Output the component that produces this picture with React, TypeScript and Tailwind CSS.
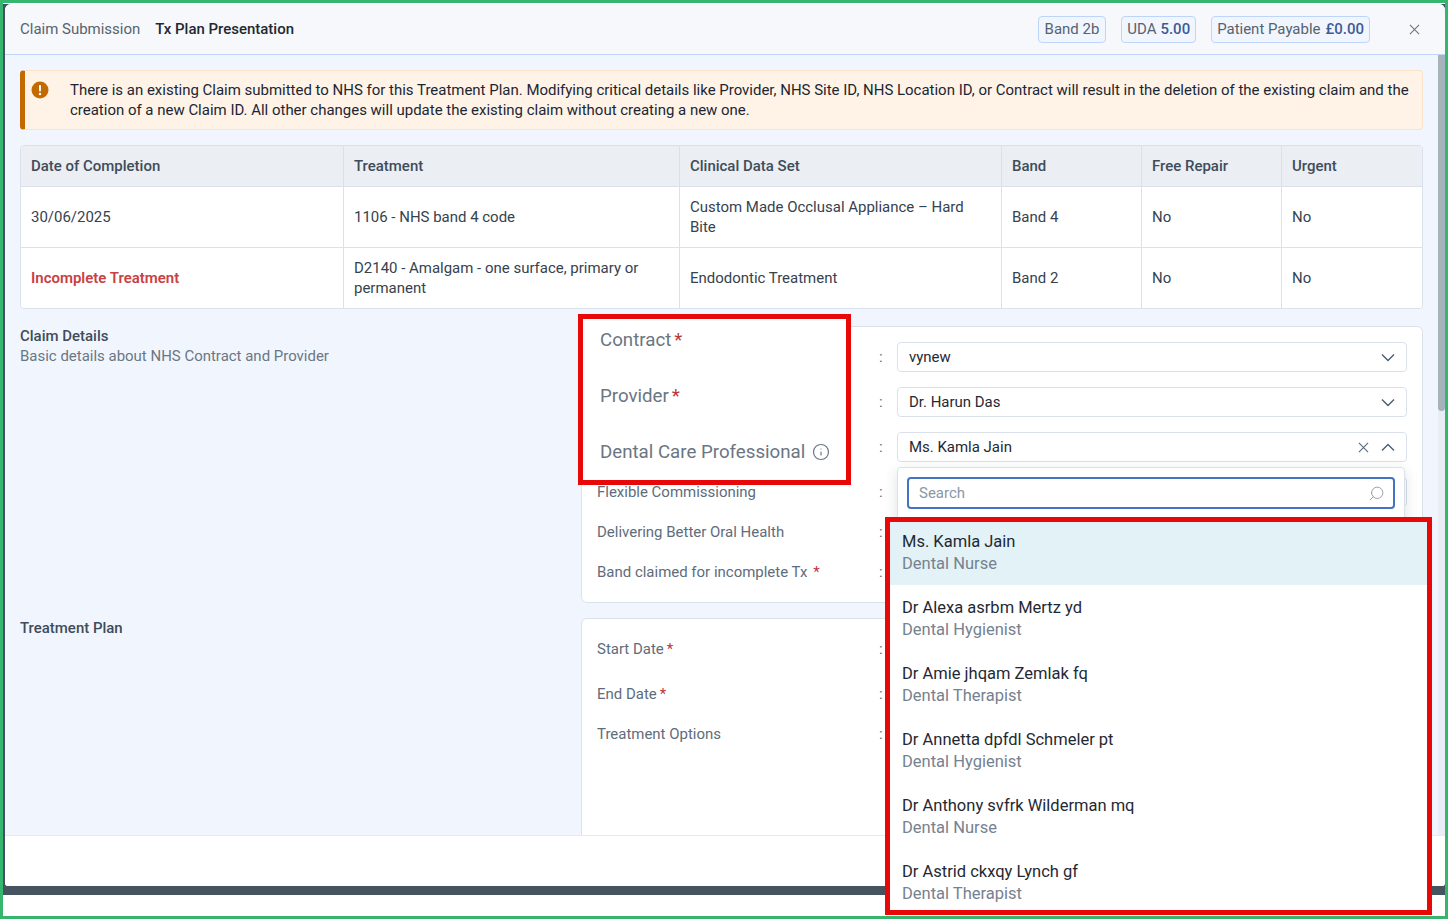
import React from "react";
import { Search, Info } from "lucide-react";

const Chevron = ({ up }: { up?: boolean }) => (
  <svg width="14" height="9" viewBox="0 0 14 9" fill="none" stroke="#4a5d70" strokeWidth="1.4" className="shrink-0">
    <path d={up ? "M1 7.5l6-6 6 6" : "M1 1.5l6 6 6-6"} />
  </svg>
);

const Cross = ({ size, color }: { size: number; color: string }) => (
  <svg width={size} height={size} viewBox="0 0 12 12" fill="none" stroke={color} strokeWidth="1.2" className="shrink-0">
    <path d="M1 1l10 10M11 1L1 11" />
  </svg>
);

const Sel = ({ v, open, clear }: { v?: string; open?: boolean; clear?: boolean }) => (
  <div className="h-[30px] w-[510px] rounded-[4px] border border-[#dbe1ea] bg-white flex items-center pl-[11px] pr-[11px] text-[14.98px] text-[#1f2933]">
    <span className="flex-1">{v}</span>
    {clear && <span className="mr-[12px]"><Cross size={11} color="#5b6b7b" /></span>}
    {v && <Chevron up={open} />}
  </div>
);

const Row = ({ label, star, wide, h, children }: { label?: string; star?: boolean; wide?: boolean; h: string; children?: React.ReactNode }) => (
  <div className={`flex items-center ${h}`}>
    <div className="w-[282px] text-[14.98px] text-[#5e6c7b]">
      {label}
      {star && <span className={`text-[#c0353a] ${wide ? "ml-[6px]" : "ml-[3px]"}`}>*</span>}
    </div>
    <div className="w-[18px] text-[15px] text-[#5e6c7b]">:</div>
    {children}
  </div>
);

const Cell = ({ w, children }: { w: string; children?: React.ReactNode }) => (
  <div className={`${w} px-[10px] flex items-center border-r border-[#dbe1ea] last:border-r-0`}>
    <div>{children}</div>
  </div>
);

const widths = ["w-[323px]", "w-[336px]", "w-[322px]", "w-[140px]", "w-[140px]", "flex-1"];

const TableRow = ({ cells }: { cells: React.ReactNode[] }) => (
  <div className="flex h-[61px] bg-white border-b border-[#dbe1ea] last:border-b-0 last:h-[60px] text-[14.98px] leading-[20px] text-[#36424e]">
    {cells.map((c, i) => (
      <Cell key={i} w={widths[i]}>{c}</Cell>
    ))}
  </div>
);

const people = [
  ["Ms. Kamla Jain", "Dental Nurse"],
  ["Dr Alexa asrbm Mertz yd", "Dental Hygienist"],
  ["Dr Amie jhqam Zemlak fq", "Dental Therapist"],
  ["Dr Annetta dpfdl Schmeler pt", "Dental Hygienist"],
  ["Dr Anthony svfrk Wilderman mq", "Dental Nurse"],
  ["Dr Astrid ckxqy Lynch gf", "Dental Therapist"],
];

export default function App() {
  return (
    <div className="relative w-[1448px] h-[919px] overflow-hidden bg-white border-[3px] border-[#36b56f] font-['Roboto',sans-serif]">
      <div className="mt-[1px] pl-[2px] h-[891px] bg-[#465064]">
      <div className="flex flex-col h-[882px] w-[1440px] rounded-t-[6px] rounded-b-[3px] overflow-hidden bg-white">
        {/* Header */}
        <div className="h-[51px] shrink-0 bg-[#f6f8fb] border-b border-[#bfd6f6] flex items-center pl-[15px] pr-[25px] text-[14.98px]">
          <span className="text-[#56626f]">Claim Submission</span>
          <span className="ml-[15px] font-medium text-[#1f2933]">Tx Plan Presentation</span>
          <div className="flex-1" />
          <div className="h-[27px] px-[6px] flex items-center rounded-[4px] border border-[#bcd5f8] bg-[#f1f6fe] text-[#56626f]">Band 2b</div>
          <div className="ml-[15px] h-[27px] px-[5px] flex items-center gap-[4px] rounded-[4px] border border-[#bcd5f8] bg-[#f1f6fe] text-[#56626f]">
            UDA <b className="font-medium text-[#3d5a94]">5.00</b>
          </div>
          <div className="ml-[15px] h-[27px] px-[5px] flex items-center gap-[5px] rounded-[4px] border border-[#bcd5f8] bg-[#f1f6fe] text-[#56626f]">
            Patient Payable <b className="font-medium text-[#3d5a94]">£0.00</b>
          </div>
          <span className="ml-[39px]"><Cross size={11} color="#6b7683" /></span>
        </div>

        {/* Body */}
        <div className="flex-1 min-h-0 bg-[#f1f6fe] flex overflow-hidden">
          <div className="w-[1433px] pl-[15px] pt-[15px] pr-[15px] flex flex-col">
            <div className="h-[60px] shrink-0 rounded-[4px] bg-[#fff3e8] border border-[#fbe2c9] border-l-[5px] border-l-[#c26a00] flex pl-[6px] pr-[8px]">
              <svg width="18" height="18" viewBox="0 0 18 18" className="mt-[10px] shrink-0">
                <circle cx="9" cy="9" r="8.5" fill="#c26a00" />
                <rect x="8" y="4" width="2" height="6.5" rx="1" fill="#fff" />
                <circle cx="9" cy="13" r="1.2" fill="#fff" />
              </svg>
              <p className="ml-[21px] mt-[9px] text-[14.98px] leading-[20px] text-[#1b2632]">
                There is an existing Claim submitted to NHS for this Treatment Plan. Modifying critical details like Provider, NHS Site ID, NHS Location ID, or Contract will result in the deletion of the existing claim and the creation of a new Claim ID. All other changes will update the existing claim without creating a new one.
              </p>
            </div>

            <div className="mt-[15px] shrink-0 rounded-[4px] border border-[#dbe1ea] overflow-hidden">
              <div className="flex h-[41px] bg-[#ebeef2] border-b border-[#dbe1ea] text-[14.98px] font-medium text-[#3f4c5a]">
                {["Date of Completion", "Treatment", "Clinical Data Set", "Band", "Free Repair", "Urgent"].map((c, i) => (
                  <Cell key={c} w={widths[i]}>{c}</Cell>
                ))}
              </div>
              <TableRow cells={["30/06/2025", "1106 - NHS band 4 code", "Custom Made Occlusal Appliance – Hard Bite", "Band 4", "No", "No"]} />
              <TableRow cells={[<span className="font-semibold text-[#c94144]">Incomplete Treatment</span>, "D2140 - Amalgam - one surface, primary or permanent", "Endodontic Treatment", "Band 2", "No", "No"]} />
            </div>

            <div className="flex mt-[17px] shrink-0">
              <div className="w-[561px]">
                <div className="text-[14.98px] leading-[20px] font-medium text-[#3f4c5a]">Claim Details</div>
                <div className="text-[14.98px] leading-[20px] text-[#6b7683]">Basic details about NHS Contract and Provider</div>
              </div>
              <div className="w-[842px] h-[277px] rounded-[6px] border border-[#dbe1ea] bg-white pl-[15px] pt-[15px]">
                <Row h="h-[30px] mb-[15px]"><Sel v="vynew" /></Row>
                <Row h="h-[30px] mb-[15px]"><Sel v="Dr. Harun Das" /></Row>
                <Row h="h-[30px] mb-[15px]"><Sel v="Ms. Kamla Jain" open clear /></Row>
                <Row label="Flexible Commissioning" h="h-[30px] mb-[10px]"><Sel /></Row>
                <Row label="Delivering Better Oral Health" h="h-[30px] mb-[10px]" />
                <Row label="Band claimed for incomplete Tx" star wide h="h-[30px]" />
              </div>
            </div>

            <div className="flex mt-[15px] shrink-0">
              <div className="w-[561px] text-[14.98px] leading-[20px] font-medium text-[#3f4c5a]">Treatment Plan</div>
              <div className="w-[842px] h-[260px] rounded-[6px] border border-[#dbe1ea] bg-white pl-[15px] pt-[15px]">
                <Row label="Start Date" star h="h-[30px] mb-[15px]" />
                <Row label="End Date" star h="h-[30px] mb-[10px]" />
                <Row label="Treatment Options" h="h-[30px]" />
              </div>
            </div>
          </div>
          {/* Scrollbar */}
          <div className="w-[7px] bg-[#e8edf6] shrink-0">
            <div className="h-[356px] rounded-b-[4px] bg-[#a6b2bc]" />
          </div>
        </div>

        {/* Footer */}
        <div className="h-[51px] shrink-0 bg-white border-t border-[#e6eaf0]" />
      </div>
      {/* Dark bar behind the modal */}
      <div className="h-[9px] -ml-[2px] bg-[#46545f]" />
      </div>

      {/* Open select menu */}
      <div className="absolute left-[894px] top-[464px] w-[508px] h-[60px] rounded-t-[4px] border border-[#dbe1ea] bg-white shadow-[0_4px_14px_rgba(30,50,80,0.14)] p-[9px]">
        <div className="h-[32px] w-[488px] rounded-[4px] border-2 border-[#4472c4] flex items-center pl-[10px] pr-[8px] text-[14.98px] text-[#8a97a6]">
          <span className="flex-1">Search</span>
          <Search size={17} strokeWidth={1.3} className="text-[#8d9aa8] -scale-x-100" />
        </div>
      </div>

      {/* Highlight: labels */}
      <div className="absolute left-[575px] top-[311px] w-[273px] h-[171px] border-[5px] border-[#e80808] bg-white pl-[17px] text-[18.7px] text-[#6b7683]">
        <div className="h-[56px] pt-[7px] leading-[28px]">Contract<span className="text-[#b8353a] ml-[3px]">*</span></div>
        <div className="h-[56px] pt-[7px] leading-[28px]">Provider<span className="text-[#b8353a] ml-[3px]">*</span></div>
        <div className="h-[49px] pb-[7px] flex items-center gap-[7px]">
          Dental Care Professional <Info size={18} strokeWidth={1.6} className="text-[#6b7683]" />
        </div>
      </div>

      {/* Highlight: options */}
      <div className="absolute left-[882px] top-[514px] w-[547px] h-[398px] border-[5px] border-[#e80808] bg-white overflow-hidden">
        {people.map(([n, r], i) => (
          <div key={n} className={i === 0 ? "h-[63px] pl-[12px] pt-[9px] bg-[#e2f2f7]" : "h-[66px] pl-[12px] pt-[12px]"}>
            <div className="text-[16.5px] leading-[22px] text-[#1f2933]">{n}</div>
            <div className="text-[16.5px] leading-[22px] text-[#75828f]">{r}</div>
          </div>
        ))}
      </div>
    </div>
  );
}
